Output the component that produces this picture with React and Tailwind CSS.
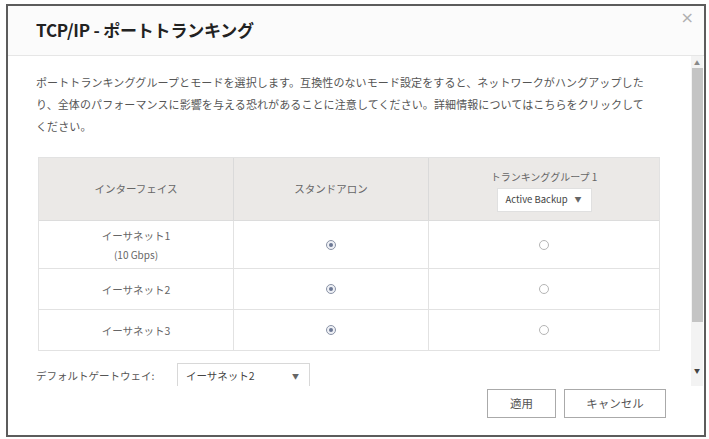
import React from 'react';

const font = { fontFamily: '"Noto Sans CJK JP", "Liberation Sans", sans-serif' };

const Radio = ({ checked }) => (
    <span className={`inline-flex items-center justify-center w-[10px] h-[10px] rounded-full border ${checked ? 'border-[#8a93a6] bg-[#eef0f5]' : 'border-[#b5b5b5] bg-white'}`}>
        {checked && <span className="w-[4px] h-[4px] rounded-full bg-[#6c7894]" />}
    </span>
);

const rows = [
    { name: 'イーサネット1', sub: '(10 Gbps)', h: 'h-[48px]' },
    { name: 'イーサネット2', h: 'h-[41px]' },
    { name: 'イーサネット3', h: 'h-[40px]' },
];

export default function App() {
    return (
        <div className="w-[709px] h-[439px] bg-white pt-[4px] pl-[6px] pr-[3px] pb-[2px] overflow-hidden" style={font}>
            <div className="relative h-full border-2 border-[#5c5c5c] bg-[#fbfbfb] flex flex-col">
                {/* Header */}
                <div className="h-[50px] flex items-center pl-[28px] pb-[2px] border-b border-[#e6e6e6] shrink-0">
                    <h1 className="text-[17px] font-bold text-[#222] tracking-[-0.2px]">TCP/IP - ポートトランキング</h1>
                </div>
                <span className="absolute right-[10px] top-[4px] text-[16px] text-[#b0b0b0] leading-none" style={{ fontFamily: '"DejaVu Sans", sans-serif' }}>×</span>

                {/* Body */}
                <div className="relative h-[330px] overflow-hidden bg-white shrink-0">
                    <div className="pl-[28px] pr-[44px] pt-[15px]">
                        <p className="text-[11px] leading-[22px] text-[#555] tracking-[0.1px] whitespace-nowrap">
                            ポートトランキンググループとモードを選択します。互換性のないモード設定をすると、ネットワークがハングアップした<br />
                            り、全体のパフォーマンスに影響を与える恐れがあることに注意してください。詳細情報についてはこちらをクリックして<br />
                            ください。
                        </p>

                        <div className="mt-[20px] ml-[2px] border border-[#e2e2e2] text-[10.5px] text-[#666]">
                            <div className="grid grid-cols-[195px_195px_1fr] h-[63px] bg-[#ebe9e7] border-b border-[#dcdcdc]">
                                <div className="flex items-center justify-center border-r border-[#dadada]">インターフェイス</div>
                                <div className="flex items-center justify-center border-r border-[#dadada]">スタンドアロン</div>
                                <div className="flex flex-col items-center justify-center gap-[4px] pt-[2px]">
                                    <span className="text-[10px]">トランキンググループ 1</span>
                                    <div className="w-[95px] h-[24px] bg-white border border-[#e0e0e0] flex items-center justify-between pl-[8px] pr-[9px] text-[9.5px] text-[#444]">
                                        <span>Active Backup</span>
                                        <span className="text-[7px] text-[#666]">▼</span>
                                    </div>
                                </div>
                            </div>
                            {rows.map((r, i) => (
                                <div key={i} className={`grid grid-cols-[195px_195px_1fr] ${r.h} ${i < rows.length - 1 ? 'border-b border-[#e2e2e2]' : ''}`}>
                                    <div className="flex flex-col items-center justify-center border-r border-[#e2e2e2] leading-[19px]">
                                        <span>{r.name}</span>
                                        {r.sub && <span className="text-[10px]">{r.sub}</span>}
                                    </div>
                                    <div className="flex items-center justify-center border-r border-[#e2e2e2]">
                                        <Radio checked />
                                    </div>
                                    <div className="flex items-center justify-center">
                                        <Radio />
                                    </div>
                                </div>
                            ))}
                        </div>

                        <div className="mt-[12px] flex items-start text-[10.5px] text-[#555]">
                            <span className="mt-[5px] w-[141px]">デフォルトゲートウェイ:</span>
                            <div className="w-[133px] h-[26px] border border-[#d8d8d8] bg-white flex items-center justify-between pl-[8px] pr-[10px] text-[#444]">
                                <span>イーサネット2</span>
                                <span className="text-[7px] text-[#666]">▼</span>
                            </div>
                        </div>
                    </div>

                    {/* Scrollbar */}
                    <div className="absolute right-[1px] top-0 bottom-0 w-[12px] bg-[#f3f3f3] flex flex-col items-center">
                        <span className="text-[6px] text-[#888] leading-none mt-[4px]">▲</span>
                        <div className="w-[11px] h-[254px] mt-[2px] bg-[#c4c4c4]" />
                        <div className="flex-1" />
                        <span className="text-[6px] text-[#444] leading-none mb-[12px]">▼</span>
                    </div>
                </div>

                {/* Footer */}
                <div className="flex-1 flex justify-end items-start pt-[3px] pr-[38px] gap-[8px] bg-white">
                    <button className="w-[69px] h-[29px] border border-[#aaa] bg-white text-[11.5px] text-[#555]">適用</button>
                    <button className="w-[102px] h-[29px] border border-[#aaa] bg-white text-[11.5px] text-[#555]">キャンセル</button>
                </div>
            </div>
        </div>
    );
}
